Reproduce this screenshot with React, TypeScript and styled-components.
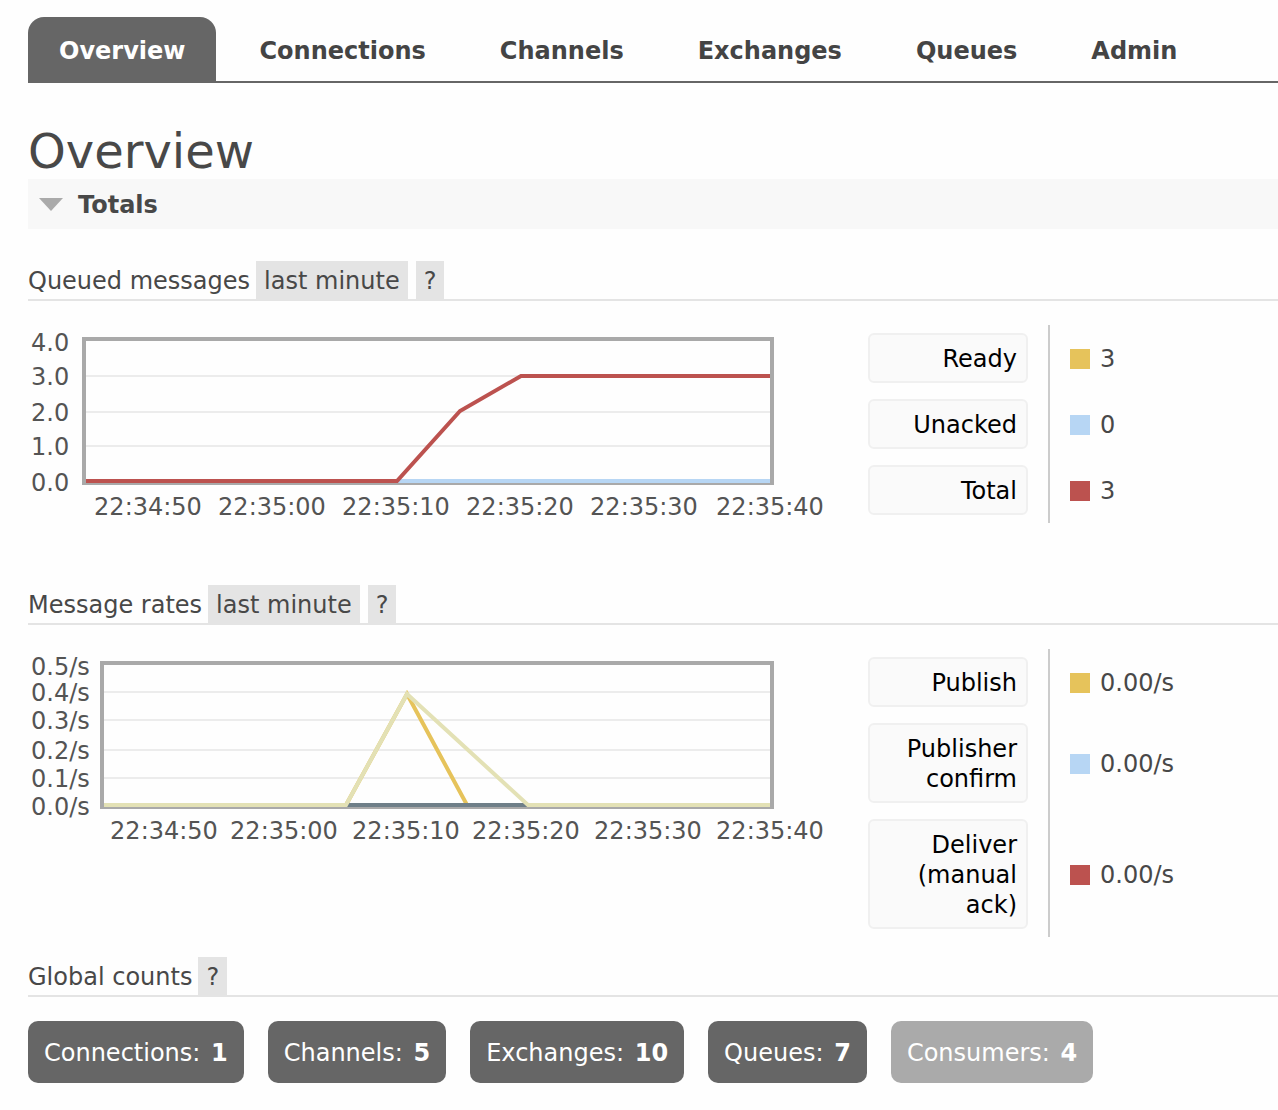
import React, { useState } from "react";
import styled, { createGlobalStyle } from "styled-components";

const GlobalStyle = createGlobalStyle`
  body {
    margin: 0;
    background: #fefefe;
    color: #484848;
    font: 24px/30px Verdana, "DejaVu Sans", sans-serif;
  }
  button {
    font: inherit;
    color: inherit;
    border: 0;
    margin: 0;
    cursor: pointer;
  }
`;

const Page = styled.div`
  padding: 17px 0 27px 28px;
`;

const Tabs = styled.nav`
  display: flex;
  gap: 12px;
  border-bottom: 2px solid #666;
`;

const Tab = styled.a<{ $active?: boolean }>`
  padding: 19px 31px 15px;
  border-radius: 16px 16px 0 0;
  font-weight: bold;
  text-decoration: none;
  color: ${(p) => (p.$active ? "#fff" : "#444")};
  background: ${(p) => (p.$active ? "#666" : "transparent")};
`;

const Title = styled.h1`
  margin: 41px 0 0;
  font-size: 48px;
  line-height: 55px;
  font-weight: normal;
`;

const SectionHeader = styled.h2`
  margin: 0 0 32px;
  font-size: inherit;
`;

const SectionToggle = styled.button`
  display: flex;
  align-items: center;
  gap: 15px;
  width: 100%;
  padding: 11px 11px 9px;
  background: #f8f8f8;
  font-weight: bold;
  text-align: left;
`;

const SubHeading = styled.h3`
  display: flex;
  gap: 8px;
  margin: 0 0 24px;
  border-bottom: 2px solid #e4e4e4;
  font-size: inherit;
  font-weight: normal;
`;

const HeadingText = styled.span`
  padding: 5px 0 3px;
  margin-right: -2px;
`;

const Chip = styled.button`
  padding: 5px 8px 3px;
  background: #e4e4e4;
`;

const ChartRow = styled.div`
  display: flex;
  align-items: flex-start;
  gap: 20px;
  margin-bottom: 20px;
`;

const ChartSvg = styled.svg`
  display: block;
  flex: none;
  font-size: 24px;
  fill: #545454;
`;

const Legend = styled.table`
  border-collapse: collapse;
`;

const LegendName = styled.th`
  padding: 8px 20px 8px 0;
  border-right: 2px solid #ccc;
  font-weight: normal;
`;

const LegendValue = styled.td`
  padding: 2px 0 0 20px;
`;

const SeriesButton = styled.button`
  display: block;
  width: 160px;
  padding: 9px 9px 7px;
  border: 2px solid #f0f0f0;
  border-radius: 6px;
  background: #fafafa;
  color: #000;
  text-align: right;
`;

const Reading = styled.span`
  display: flex;
  align-items: center;
  gap: 10px;
`;

const Swatch = styled.span<{ $color: string }>`
  width: 20px;
  height: 20px;
  background: ${(p) => p.$color};
`;

const Counts = styled.div`
  display: flex;
  flex-wrap: wrap;
  gap: 24px;
`;

const Count = styled.a<{ $muted?: boolean }>`
  padding: 17px 16px 15px;
  border-radius: 10px;
  background: ${(p) => (p.$muted ? "#aaa" : "#666")};
  color: #fff;
  text-decoration: none;

  b {
    margin-left: 3px;
  }
`;

const YELLOW = "#e6c35b";
const BLUE = "#b7d6f4";
const RED = "#bc524f";
const KHAKI = "#e3e1b5";
const SLATE = "#6f7f88";

type Tick = { label: string; at: number };
type Line = { color: string; points: string };

interface ChartProps {
  title: string;
  left: number;
  yTicks: Tick[];
  grid: number[];
  xTicks: Tick[];
  lines: Line[];
}

function Chart({ title, left, yTicks, grid, xTicks, lines }: ChartProps) {
  return (
    <ChartSvg width="820" height="240" viewBox="0 0 820 240" role="img" aria-label={title}>
      {grid.map((y) => (
        <line key={y} x1={left} x2="744" y1={y} y2={y} stroke="#ececec" strokeWidth="2" />
      ))}
      <rect x={left} y="14" width={744 - left} height="144" fill="none" stroke="#a9a9a9" strokeWidth="4" />
      {lines.map((l, i) => (
        <polyline key={i} points={l.points} fill="none" stroke={l.color} strokeWidth="4" />
      ))}
      {yTicks.map((t) => (
        <text key={t.label} x="3" y={t.at}>
          {t.label}
        </text>
      ))}
      {xTicks.map((t) => (
        <text key={t.label} x={t.at} y="190" textAnchor="middle">
          {t.label}
        </text>
      ))}
    </ChartSvg>
  );
}

type Series = { name: string; value: string; color: string };

function SeriesLegend({ series }: { series: Series[] }) {
  return (
    <Legend>
      <tbody>
        {series.map((s) => (
          <tr key={s.name}>
            <LegendName scope="row">
              <SeriesButton type="button">{s.name}</SeriesButton>
            </LegendName>
            <LegendValue>
              <Reading>
                <Swatch $color={s.color} />
                {s.value}
              </Reading>
            </LegendValue>
          </tr>
        ))}
      </tbody>
    </Legend>
  );
}

function BlockHeading({ text, range }: { text: string; range?: string }) {
  return (
    <SubHeading>
      <HeadingText>{text}</HeadingText>
      {range && <Chip type="button">{range}</Chip>}
      <Chip type="button">?</Chip>
    </SubHeading>
  );
}

const TIMES = ["22:34:50", "22:35:00", "22:35:10", "22:35:20", "22:35:30", "22:35:40"];
const ticks = (labels: string[], at: number[]): Tick[] =>
  labels.map((label, i) => ({ label, at: at[i] }));

const TABS = ["Overview", "Connections", "Channels", "Exchanges", "Queues", "Admin"];

const COUNTS = [
  { name: "Connections", value: 1 },
  { name: "Channels", value: 5 },
  { name: "Exchanges", value: 10 },
  { name: "Queues", value: 7 },
  { name: "Consumers", value: 4, muted: true },
];

export default function App() {
  const [open, setOpen] = useState(true);

  return (
    <>
      <GlobalStyle />
      <Page>
        <Tabs>
          {TABS.map((t, i) => (
            <Tab key={t} href="#" $active={i === 0}>
              {t}
            </Tab>
          ))}
        </Tabs>
        <main>
          <Title>Overview</Title>
          <SectionHeader>
            <SectionToggle type="button" aria-expanded={open} onClick={() => setOpen(!open)}>
              <svg width="24" height="14" viewBox="0 0 24 14" aria-hidden="true">
                <path d="M0 0H24L12 13Z" fill="#aaa" />
              </svg>
              Totals
            </SectionToggle>
          </SectionHeader>
          {open && (
            <>
              <BlockHeading text="Queued messages" range="last minute" />
              <ChartRow>
                <Chart
                  title="Queued messages"
                  left={56}
                  grid={[51, 87, 121]}
                  yTicks={ticks(["4.0", "3.0", "2.0", "1.0", "0.0"], [26, 60, 96, 130, 166])}
                  xTicks={ticks(TIMES, [120, 244, 368, 492, 616, 742])}
                  lines={[
                    { color: BLUE, points: "58,156 742,156" },
                    { color: RED, points: "58,156 369,156 432,86 493,51 742,51" },
                  ]}
                />
                <SeriesLegend
                  series={[
                    { name: "Ready", value: "3", color: YELLOW },
                    { name: "Unacked", value: "0", color: BLUE },
                    { name: "Total", value: "3", color: RED },
                  ]}
                />
              </ChartRow>

              <BlockHeading text="Message rates" range="last minute" />
              <ChartRow>
                <Chart
                  title="Message rates"
                  left={74}
                  grid={[43, 71, 101, 129]}
                  yTicks={ticks(
                    ["0.5/s", "0.4/s", "0.3/s", "0.2/s", "0.1/s", "0.0/s"],
                    [26, 52, 80, 110, 138, 166]
                  )}
                  xTicks={ticks(TIMES, [136, 256, 378, 498, 620, 742])}
                  lines={[
                    { color: YELLOW, points: "76,156 318,156 379,45 439,156 742,156" },
                    { color: SLATE, points: "76,156 742,156" },
                    { color: KHAKI, points: "76,156 318,156 379,45 500,156 742,156" },
                  ]}
                />
                <SeriesLegend
                  series={[
                    { name: "Publish", value: "0.00/s", color: YELLOW },
                    { name: "Publisher confirm", value: "0.00/s", color: BLUE },
                    { name: "Deliver (manual ack)", value: "0.00/s", color: RED },
                  ]}
                />
              </ChartRow>

              <BlockHeading text="Global counts" />
              <Counts>
                {COUNTS.map((c) => (
                  <Count key={c.name} href="#" $muted={c.muted}>
                    {c.name}: <b>{c.value}</b>
                  </Count>
                ))}
              </Counts>
            </>
          )}
        </main>
      </Page>
    </>
  );
}
